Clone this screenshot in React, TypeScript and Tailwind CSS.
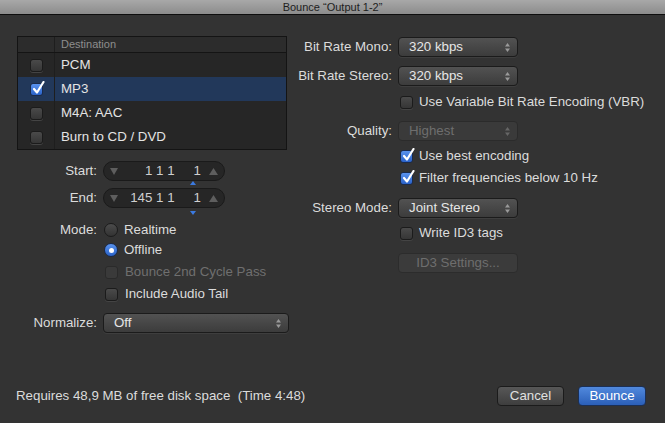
import React from 'react';

function CheckBox({ checked = false, disabled = false }: { checked?: boolean; disabled?: boolean }) {
  if (checked) {
    return (
      <div className="relative w-[13px] h-[13px] rounded-[3px] border border-[#1a2a4a] bg-gradient-to-b from-[#5a93ee] to-[#2a62c8] shrink-0">
        <svg className="absolute -top-[3px] left-[1px]" width="13" height="14" viewBox="0 0 13 14">
          <path d="M2 8 L5 11.5 L11.5 1" fill="none" stroke="#fff" strokeWidth="2.2" strokeLinecap="round" strokeLinejoin="round" />
        </svg>
      </div>
    );
  }
  return (
    <div
      className={
        disabled
          ? 'w-[13px] h-[13px] rounded-[3px] border border-[#2a2a2a] bg-[#3a3a3a] shrink-0'
          : 'w-[13px] h-[13px] rounded-[3px] border border-[#1b1b1b] bg-gradient-to-b from-[#4a4a4a] to-[#363636] shadow-[0_1px_0_#444] shrink-0'
      }
    />
  );
}

function Radio({ checked = false }: { checked?: boolean }) {
  if (checked) {
    return (
      <div className="w-[14px] h-[14px] rounded-full border border-[#1a2a4a] bg-gradient-to-b from-[#5a93ee] to-[#2a62c8] flex items-center justify-center shrink-0">
        <div className="w-[5px] h-[5px] rounded-full bg-white" />
      </div>
    );
  }
  return <div className="w-[14px] h-[14px] rounded-full border border-[#1b1b1b] bg-gradient-to-b from-[#4c4c4c] to-[#333] shrink-0" />;
}

function Arrows({ dim = false }: { dim?: boolean }) {
  const c = dim ? '#666' : '#9a9a9a';
  return (
    <svg width="7" height="11" viewBox="0 0 7 11">
      <path d="M3.5 1 L6 4.5 L1 4.5 Z" fill={c} />
      <path d="M3.5 10 L6 6.5 L1 6.5 Z" fill={c} />
    </svg>
  );
}

function Select({ value, width, disabled = false }: { value: string; width: string; disabled?: boolean }) {
  return (
    <div
      className={
        (disabled
          ? 'bg-[#3a3a3a] border-[#2b2b2b] text-[#6e6e6e] '
          : 'bg-gradient-to-b from-[#525252] to-[#3c3c3c] border-[#1b1b1b] text-[#e6e6e6] shadow-[0_1px_0_#3e3e3e] ') +
        width +
        ' h-5 rounded-[4px] border flex items-center justify-between pl-[10px] pr-[6px]'
      }
    >
      <span>{value}</span>
      <Arrows dim={disabled} />
    </div>
  );
}

function Spin({ left, right }: { left: string; right: string }) {
  return (
    <div className="w-[122px] h-5 rounded-full bg-[#262626] border border-[#1a1a1a] flex items-center pl-[6px] pr-[6px] text-[#cfcfcf]">
      <svg width="8" height="7" viewBox="0 0 8 7">
        <path d="M0 0 L8 0 L4 7 Z" fill="#5e5e5e" />
      </svg>
      <span className="ml-auto whitespace-pre">{left}</span>
      <span className="ml-[19px] whitespace-pre">{right}</span>
      <svg className="ml-[8px]" width="9" height="7" viewBox="0 0 9 7">
        <path d="M4.5 0 L9 7 L0 7 Z" fill="#5e5e5e" />
      </svg>
    </div>
  );
}

function Button({ label, primary = false, disabled = false }: { label: string; primary?: boolean; disabled?: boolean }) {
  const cls = primary
    ? 'w-[68px] bg-gradient-to-b from-[#5189dd] to-[#2b5fb8] border-[#1b2f55] text-white'
    : disabled
      ? 'w-[120px] bg-[#3b3b3b] border-[#2c2c2c] text-[#6e6e6e]'
      : 'w-[67px] bg-gradient-to-b from-[#575757] to-[#3e3e3e] border-[#1b1b1b] text-[#e0e0e0]';
  return <div className={cls + ' h-5 rounded-[4px] border flex items-center justify-center'}>{label}</div>;
}

const rows = [
  { name: 'PCM', checked: false },
  { name: 'MP3', checked: true },
  { name: 'M4A: AAC', checked: false },
  { name: 'Burn to CD / DVD', checked: false },
];

export default function App() {
  return (
    <div
      className="w-[665px] h-[423px] bg-[#333333] flex flex-col text-[13.3px] text-[#dcdcdc] overflow-hidden"
      style={{ fontFamily: '"Liberation Sans", Arial, sans-serif' }}
    >
      <div className="h-[15px] shrink-0 bg-gradient-to-b from-[#a8a8a8] to-[#8c8c8c] border-b border-[#0e0e0e] flex items-center justify-center text-[11px] text-[#1e1e1e] leading-none">
        Bounce “Output 1-2”
      </div>

      <div className="flex">
        {/* left column */}
        <div className="w-[290px] pl-[17px] pt-[21px] shrink-0">
          <div className="w-[270px] border border-[#141414] bg-[#262626]">
            <div className="flex h-[16px] bg-[#2c2c2c] border-b border-[#141414] text-[11px] text-[#8e8e8e] items-center">
              <div className="w-[37px] h-full border-r border-[#1e1e1e]" />
              <div className="pl-[6px]">Destination</div>
            </div>
            {rows.map((r) => (
              <div key={r.name} className={(r.checked ? 'bg-[#22385a] ' : '') + 'flex h-[24px] items-center'}>
                <div className="w-[37px] h-full border-r border-[#1e1e1e] flex items-center justify-center">
                  <CheckBox checked={r.checked} />
                </div>
                <div className="pl-[6px] text-[#e4e4e4]">{r.name}</div>
              </div>
            ))}
          </div>

          <div className="mt-[11px] grid grid-cols-[80px_1fr] gap-x-[6px] items-center">
            <div className="text-right h-5 leading-5">Start:</div>
            <div className="relative h-5">
              <Spin left="1 1 1" right="1" />
              <svg className="absolute left-[87px] top-[20px]" width="6" height="4" viewBox="0 0 6 4">
                <path d="M3 0 L6 4 L0 4 Z" fill="#3b7ae0" />
              </svg>
            </div>

            <div className="text-right h-5 leading-5 mt-[7px]">End:</div>
            <div className="relative h-5 mt-[7px]">
              <Spin left="145 1 1" right="1" />
              <svg className="absolute left-[87px] top-[23px]" width="6" height="4" viewBox="0 0 6 4">
                <path d="M0 0 L6 0 L3 4 Z" fill="#3b7ae0" />
              </svg>
            </div>

            <div className="text-right mt-[13px] h-[18px] leading-[18px]">Mode:</div>
            <div className="flex items-center gap-[6px] mt-[13px] h-[18px] pl-[1px]">
              <Radio />
              <span>Realtime</span>
            </div>

            <div className="mt-[2px]" />
            <div className="flex items-center gap-[6px] mt-[2px] h-[18px] pl-[1px]">
              <Radio checked />
              <span>Offline</span>
            </div>

            <div className="mt-[4px]" />
            <div className="flex items-center gap-[7px] mt-[4px] h-[18px] pl-[2px]">
              <CheckBox disabled />
              <span className="text-[#6f6f6f]">Bounce 2nd Cycle Pass</span>
            </div>

            <div className="mt-[4px]" />
            <div className="flex items-center gap-[7px] mt-[4px] h-[18px] pl-[2px]">
              <CheckBox />
              <span>Include Audio Tail</span>
            </div>

            <div className="text-right mt-[10px] h-5 leading-5">Normalize:</div>
            <div className="mt-[10px]">
              <Select value="Off" width="w-[186px]" />
            </div>
          </div>
        </div>

        {/* right column */}
        <div className="flex-1 pt-[22px]">
          <div className="grid grid-cols-[102px_1fr] gap-x-[6px] items-center">
            <div className="text-right h-5 leading-5">Bit Rate Mono:</div>
            <div><Select value="320 kbps" width="w-[120px]" /></div>

            <div className="text-right h-5 leading-5 mt-[9px]">Bit Rate Stereo:</div>
            <div className="mt-[9px]"><Select value="320 kbps" width="w-[120px]" /></div>

            <div className="mt-[6px]" />
            <div className="flex items-center gap-[6px] h-5 mt-[6px] pl-[2px]">
              <CheckBox />
              <span>Use Variable Bit Rate Encoding (VBR)</span>
            </div>

            <div className="text-right h-5 leading-5 mt-[9px]">Quality:</div>
            <div className="mt-[9px]"><Select value="Highest" width="w-[120px]" disabled /></div>

            <div className="mt-[5px]" />
            <div className="flex items-center gap-[6px] h-5 mt-[5px] pl-[2px]">
              <CheckBox checked />
              <span>Use best encoding</span>
            </div>

            <div className="mt-[2px]" />
            <div className="flex items-center gap-[6px] h-5 mt-[2px] pl-[2px]">
              <CheckBox checked />
              <span>Filter frequencies below 10 Hz</span>
            </div>

            <div className="text-right h-5 leading-5 mt-[10px]">Stereo Mode:</div>
            <div className="mt-[10px]"><Select value="Joint Stereo" width="w-[120px]" /></div>

            <div className="mt-[5px]" />
            <div className="flex items-center gap-[6px] h-5 mt-[5px] pl-[2px]">
              <CheckBox />
              <span>Write ID3 tags</span>
            </div>

            <div className="mt-[10px]" />
            <div className="mt-[10px]"><Button label="ID3 Settings..." disabled /></div>
          </div>
        </div>
      </div>

      <div className="mt-auto mb-[17px] flex items-center pl-[16px] pr-[19px]">
        <span className="whitespace-pre">Requires 48,9 MB of free disk space  (Time 4:48)</span>
        <div className="ml-auto flex gap-[14px]">
          <Button label="Cancel" />
          <Button label="Bounce" primary />
        </div>
      </div>
    </div>
  );
}
